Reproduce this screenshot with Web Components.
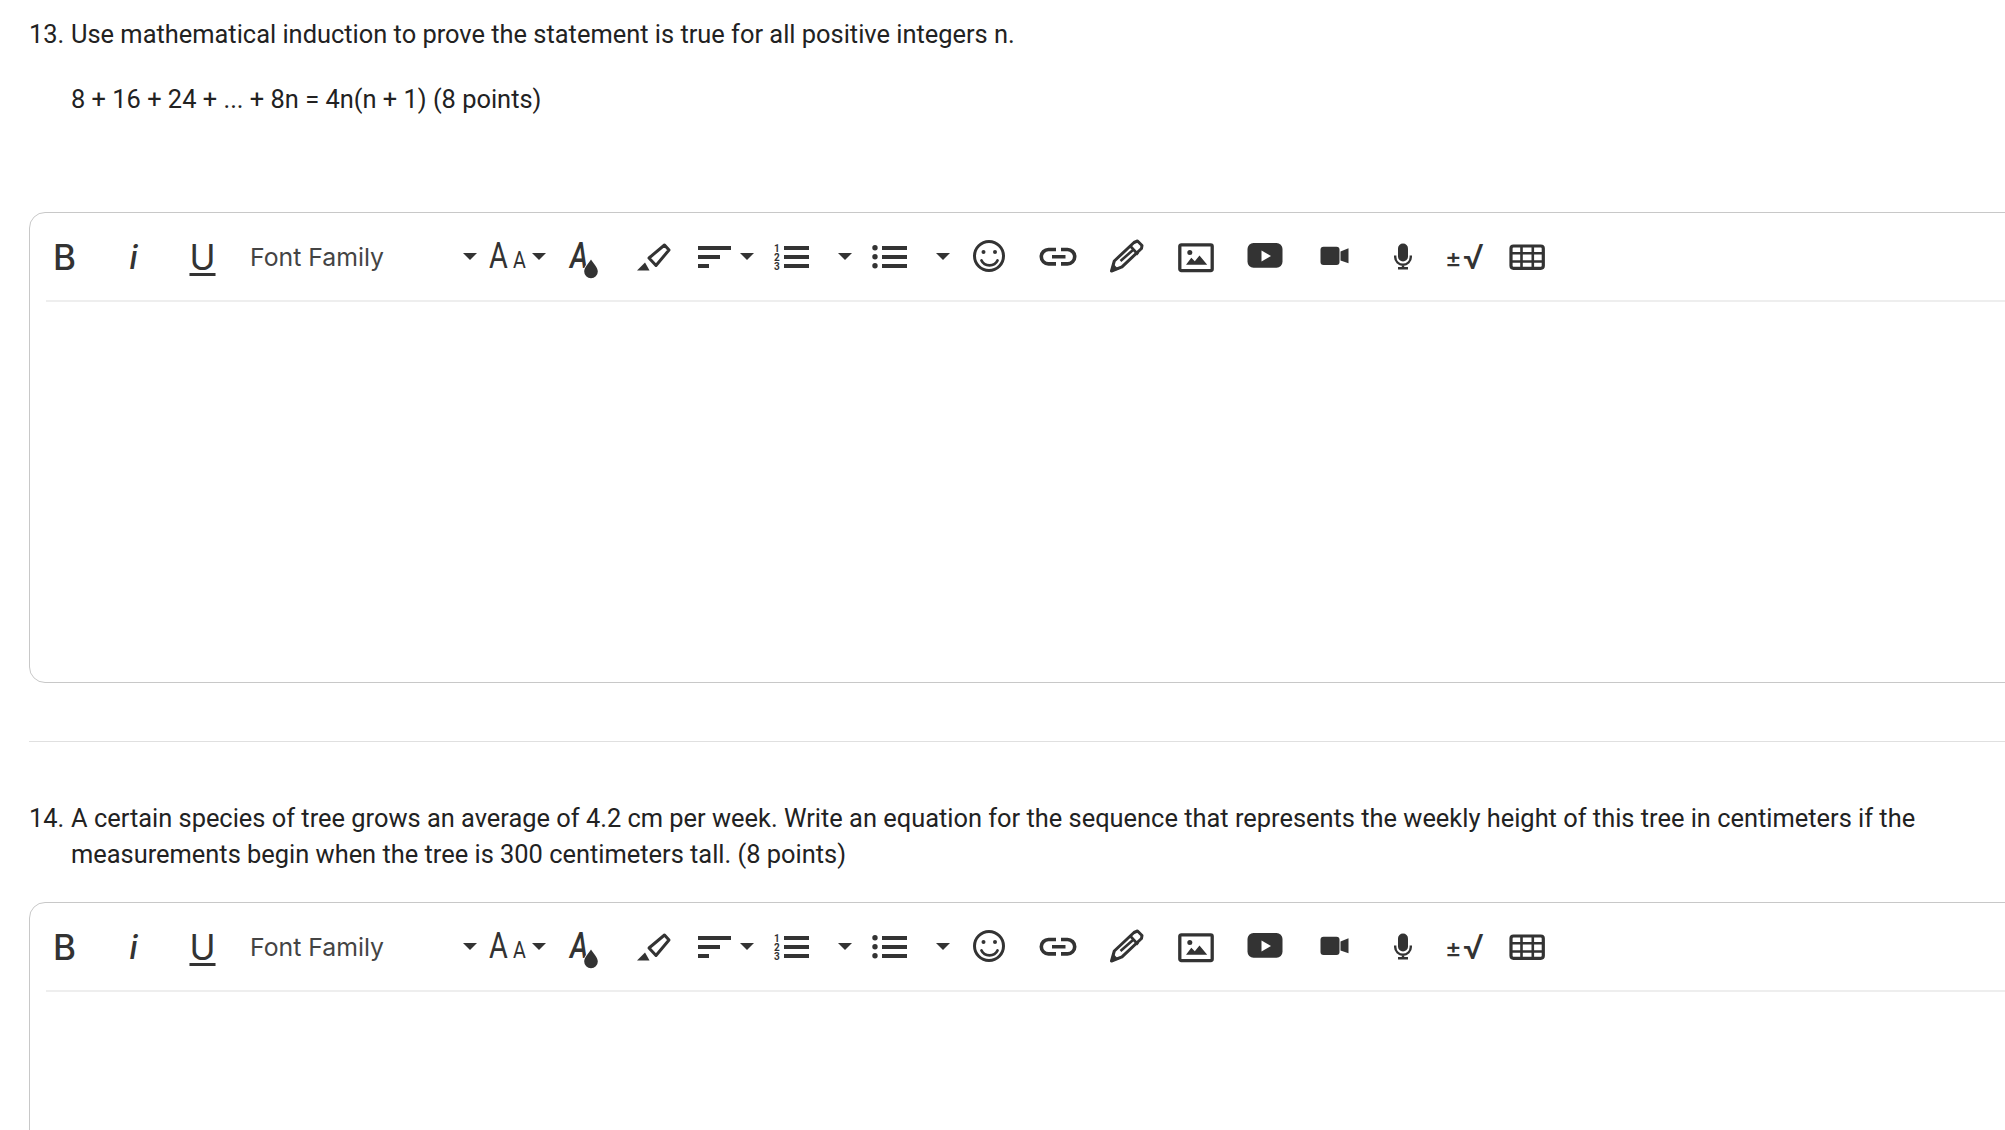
<!DOCTYPE html>
<html>
<head>
<meta charset="utf-8">
<style>
  html, body { margin: 0; padding: 0; background: #fff; overflow: hidden; }
  body { width: 2040px; font-family: Roboto, sans-serif; }
</style>
</head>
<body>
<quiz-page>
  <quiz-question number="13.">
    <p>Use mathematical induction to prove the statement is true for all positive integers n.</p>
    <p>8 + 16 + 24 + ... + 8n = 4n(n + 1) (8 points)</p>
    <rich-editor slot="editor" gap="95" height="471"></rich-editor>
  </quiz-question>
  <quiz-question number="14.">
    <p>A certain species of tree grows an average of 4.2 cm per week. Write an equation for the sequence that represents the weekly height of this tree in centimeters if the measurements begin when the tree is 300 centimeters tall. (8 points)</p>
    <rich-editor slot="editor" gap="30" height="471"></rich-editor>
  </quiz-question>
</quiz-page>

<script>
const ICONS = {
  drop: `<svg width="40" height="40" viewBox="0 0 40 40" style="overflow:visible"><path fill="#333" stroke="#fff" stroke-width="2" paint-order="stroke" d="M26 22.500c2.500 4 6.800 8 6.800 12a6.800 6.800 0 0 1-13.600 0c0-4 4.300-8 6.800-12z"/></svg>`,
  marker: `<svg width="40" height="40" viewBox="0 0 40 40"><path fill="none" stroke="#333" stroke-width="3" stroke-linejoin="round" d="M15 21 30.500 8l4.500 5L22 28.500z"/><path fill="#333" d="M3 33.500 11 25.500 15.500 33.500z"/></svg>`,
  align: `<svg width="40" height="40" viewBox="0 0 40 40"><path fill="#333" d="M3 9h33v4H3zM3 18h22v4H3zM3 27h11v4H3z"/></svg>`,
  ol: `<svg width="40" height="40" viewBox="0 0 40 40"><path fill="#333" d="M11 9h25v4H11zM11 18h25v4H11zM11 27h25v4H11z"/><g font-family="Roboto" font-size="10" font-weight="700" fill="#333"><text x="1" y="15">1</text><text x="1" y="24">2</text><text x="1" y="32.500">3</text></g></svg>`,
  ul: `<svg width="40" height="40" viewBox="0 0 40 40"><circle cx="7" cy="10.700" r="2.700" fill="#333"/><circle cx="7" cy="19.700" r="2.700" fill="#333"/><circle cx="7" cy="28.700" r="2.700" fill="#333"/><path fill="#333" d="M14 9h25v4H14zM14 18h25v4H14zM14 27h25v4H14z"/></svg>`,
  smile: `<svg width="40" height="40" viewBox="0 0 40 40"><circle cx="20" cy="19" r="14.500" fill="none" stroke="#333" stroke-width="3"/><circle cx="14.500" cy="15" r="2" fill="#333"/><circle cx="26" cy="15" r="2" fill="#333"/><path fill="none" stroke="#333" stroke-width="2.800" stroke-linecap="round" d="M12.500 23.500c3 6.500 13 6.500 16 0"/></svg>`,
  link: `<svg width="40" height="40" viewBox="0 0 40 40"><path fill="none" stroke="#333" stroke-width="3.600" d="M18 12.500h-7.500a7.200 7.200 0 0 0 0 14.400H18M23 12.500h6.500a7.200 7.200 0 0 1 0 14.400H23"/><path fill="#333" d="M14 18h13.500v3.500H14z"/></svg>`,
  pencil: `<svg width="40" height="40" viewBox="0 0 40 40"><path fill="none" stroke="#333" stroke-width="3" stroke-linejoin="round" d="M4.500 34l2.800-10 19.700-18.500 3.500-1.500 4.500 4.500-.5 3L15 29.800z"/><path fill="none" stroke="#333" stroke-width="2.600" d="M22.800 8.500l8.200 9M13.500 24L26 13"/><path fill="#333" d="M3.500 35l2.200-9 6 6.500z"/></svg>`,
  image: `<svg width="40" height="40" viewBox="0 0 40 40"><rect x="3.800" y="7.800" width="32.400" height="25.800" rx="1.500" fill="none" stroke="#333" stroke-width="3.300"/><circle cx="13.800" cy="15.500" r="2.500" fill="#333"/><path fill="#333" d="M10 27.800l5.300-7 3.500 3.500 4.700-5.800 7.700 9.300z"/></svg>`,
  youtube: `<svg width="40" height="40" viewBox="0 0 40 40"><rect x="2.500" y="6" width="35" height="24.700" rx="6" fill="#333"/><path fill="#fff" d="M16.500 13.500 26 19l-9.500 5.500z"/></svg>`,
  video: `<svg width="40" height="40" viewBox="0 0 40 40"><rect x="6.500" y="9.700" width="19" height="18.300" rx="3" fill="#333"/><path fill="#333" d="M26.500 14.500 34.500 11.300V26.300L26.500 23.500z"/></svg>`,
  mic: `<svg width="40" height="40" viewBox="0 0 40 40"><rect x="15" y="6.500" width="10" height="18" rx="5" fill="#333"/><path fill="none" stroke="#333" stroke-width="2.400" d="M12.200 18.500v1.500a7.800 7.800 0 0 0 15.600 0v-1.500M20 27.500v3.500M15 31.200h10"/></svg>`,
  table: `<svg width="40" height="40" viewBox="0 0 40 40"><rect x="4" y="9" width="32.300" height="22.300" rx="2.500" fill="none" stroke="#333" stroke-width="3.200"/><path fill="none" stroke="#333" stroke-width="2.600" d="M3 16.200h34M3 24.500h34M14.500 8v24M25.800 8v24"/></svg>`
};

const pageTemplate = document.createElement('template');
pageTemplate.innerHTML = `
  <style>
    :host { display: block; padding: 16px 0 0 29px; color: #222; font-family: Roboto, sans-serif; }
  </style>
  <slot></slot>
`;

class QuizPage extends HTMLElement {
  constructor() {
    super();
    this.attachShadow({ mode: 'open' });
    this.shadowRoot.appendChild(pageTemplate.content.cloneNode(true));
  }
}

const questionTemplate = document.createElement('template');
questionTemplate.innerHTML = `
  <style>
    :host { display: block; }
    :host(:not(:last-child)) .sep { display: block; }
    .row { display: flex; font-size: 25.42px; line-height: 36px; }
    .num { flex: 0 0 42px; }
    .text { flex: 1; }
    ::slotted(p) { margin: 0 0 29px; }
    ::slotted(p:last-of-type) { margin: 0; }
    .sep { display: none; height: 1px; background: #e0e0e0; margin: 58px 0 58px; }
  </style>
  <div class="row">
    <span class="num"></span>
    <div class="text"><slot></slot></div>
  </div>
  <slot name="editor"></slot>
  <div class="sep"></div>
`;

class QuizQuestion extends HTMLElement {
  constructor() {
    super();
    this.attachShadow({ mode: 'open' });
    this.shadowRoot.appendChild(questionTemplate.content.cloneNode(true));
  }
  connectedCallback() {
    this.shadowRoot.querySelector('.num').textContent = this.getAttribute('number');
  }
}

const toolTemplate = document.createElement('template');
toolTemplate.innerHTML = `
  <style>
    :host { display: flex; align-items: center; justify-content: center; height: 87px; flex: none; color: #333; position: relative; }
    svg { display: block; }
  </style>
  <slot></slot>
`;

class ToolButton extends HTMLElement {
  constructor() {
    super();
    this.attachShadow({ mode: 'open' });
    this.shadowRoot.appendChild(toolTemplate.content.cloneNode(true));
  }
  connectedCallback() {
    this.style.width = (this.getAttribute('width') || 69) + 'px';
    const icon = this.getAttribute('icon');
    if (icon) {
      const box = document.createElement('span');
      box.style.cssText = 'display:block;width:40px;height:40px;position:relative';
      box.innerHTML = ICONS[icon];
      this.shadowRoot.appendChild(box);
    }
  }
}

const caretTemplate = document.createElement('template');
caretTemplate.innerHTML = `
  <style>
    :host { display: block; width: 14px; height: 7px; flex: none; background: #333; clip-path: polygon(0 0, 100% 0, 50% 100%); }
  </style>
`;

class ToolCaret extends HTMLElement {
  constructor() {
    super();
    this.attachShadow({ mode: 'open' });
    this.shadowRoot.appendChild(caretTemplate.content.cloneNode(true));
  }
}

const menuTemplate = document.createElement('template');
menuTemplate.innerHTML = `
  <style>
    :host { display: flex; align-items: center; height: 87px; flex: none; color: #333; box-sizing: border-box; }
    .lead { display: block; width: 40px; height: 40px; flex: none; }
    svg { display: block; }
  </style>
  <span class="lead"></span>
  <tool-caret></tool-caret>
`;

class ToolMenu extends HTMLElement {
  constructor() {
    super();
    this.attachShadow({ mode: 'open' });
    this.shadowRoot.appendChild(menuTemplate.content.cloneNode(true));
  }
  connectedCallback() {
    this.style.width = this.getAttribute('width') + 'px';
    this.style.paddingLeft = this.getAttribute('lead') + 'px';
    this.shadowRoot.querySelector('.lead').innerHTML = ICONS[this.getAttribute('icon')];
    this.shadowRoot.querySelector('tool-caret').style.marginLeft = this.getAttribute('gap') + 'px';
  }
}

const editorTemplate = document.createElement('template');
editorTemplate.innerHTML = `
  <style>
    :host { display: block; }
    * { box-sizing: border-box; }
    .box { border: 1px solid #c8c8c8; border-radius: 16px; }
    .bar { display: flex; align-items: center; height: 87px; font-family: Inter, sans-serif; color: #333; }
    .rule { height: 2px; background: #eee; margin-left: 16px; }
    .b { font-size: 35px; font-weight: 500; }
    .i { font-size: 33px; font-weight: 500; font-style: italic; }
    .u { font-size: 35px; font-weight: 400; text-decoration: underline; text-decoration-thickness: 3px; text-underline-offset: 3px; }
    .family { display: flex; align-items: center; justify-content: space-between; width: 243px; padding: 0 3px 0 13px; font-size: 24.800px; color: #444; flex: none; }
    .aa { display: flex; align-items: center; width: 70px; padding-left: 9px; flex: none; }
    .aa span { flex: none; width: 43px; font-size: 36px; line-height: 40px; font-family: Roboto, sans-serif; position: relative; top: 1px; white-space: nowrap; }
    .aa em { display: inline-block; font-style: normal; transform: scaleX(.8); transform-origin: left bottom; width: 24px; }
    .aa small { display: inline-block; font-size: 24px; transform: scaleX(.82); transform-origin: left bottom; }
    .dropa { font-size: 36px; line-height: 36px; font-weight: 500; font-family: Roboto, sans-serif; font-style: italic; position: absolute; left: 20px; top: 25px; transform: scaleX(.78); transform-origin: left top; }
    .sqrt { font-size: 25px; font-weight: 500; white-space: nowrap; line-height: 40px; }
    .sqrt span { font-size: 34px; font-weight: 400; margin-left: 1px; position: relative; top: 2px; }
  </style>
  <div class="box">
    <div class="bar">
      <tool-button><span class="b">B</span></tool-button>
      <tool-button><span class="i">i</span></tool-button>
      <tool-button><span class="u">U</span></tool-button>
      <div class="family"><span>Font Family</span><tool-caret></tool-caret></div>
      <div class="aa"><span><em>A</em><small>A</small></span><tool-caret></tool-caret></div>
      <tool-button icon="drop"><span class="dropa">A</span></tool-button>
      <tool-button icon="marker"></tool-button>
      <tool-menu width="70" lead="7" icon="align" gap="5"></tool-menu>
      <tool-menu width="98" lead="15" icon="ol" gap="25"></tool-menu>
      <tool-menu width="98" lead="12" icon="ul" gap="28"></tool-menu>
      <tool-button icon="smile"></tool-button>
      <tool-button icon="link"></tool-button>
      <tool-button icon="pencil"></tool-button>
      <tool-button icon="image"></tool-button>
      <tool-button icon="youtube"></tool-button>
      <tool-button icon="video"></tool-button>
      <tool-button icon="mic"></tool-button>
      <tool-button width="55"><span class="sqrt">±<span>√</span></span></tool-button>
      <tool-button icon="table"></tool-button>
    </div>
    <div class="rule"></div>
    <div class="body"></div>
  </div>
`;

class RichEditor extends HTMLElement {
  constructor() {
    super();
    this.attachShadow({ mode: 'open' });
    this.shadowRoot.appendChild(editorTemplate.content.cloneNode(true));
  }
  connectedCallback() {
    this.style.marginTop = this.getAttribute('gap') + 'px';
    this.shadowRoot.querySelector('.box').style.height = this.getAttribute('height') + 'px';
  }
}

customElements.define('quiz-page', QuizPage);
customElements.define('quiz-question', QuizQuestion);
customElements.define('tool-caret', ToolCaret);
customElements.define('tool-button', ToolButton);
customElements.define('tool-menu', ToolMenu);
customElements.define('rich-editor', RichEditor);
</script>
</body>
</html>
